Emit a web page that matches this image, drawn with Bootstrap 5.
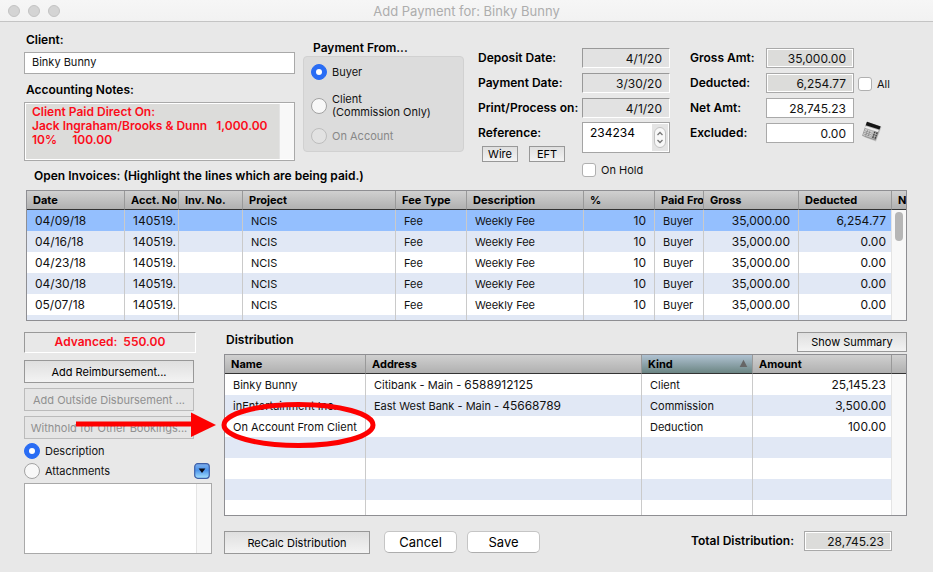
<!DOCTYPE html>
<html lang="en">
<head>
<meta charset="utf-8">
<meta name="viewport" content="width=device-width, initial-scale=1">
<title>Add Payment for: Binky Bunny</title>
<link href="https://cdn.jsdelivr.net/npm/bootstrap@5.3.0/dist/css/bootstrap.min.css" rel="stylesheet">
<style>
body{font-family:Inter,"Liberation Sans",sans-serif;font-size:11px;line-height:14px;color:#111;background:#e8e8e8}
.titlebar{height:22px;background:linear-gradient(#f6f6f6,#f2f2f2);border-bottom:1px solid #c4c4c4;color:#adadad;font-size:13px;line-height:20px;padding:0 8px}
.dot{width:12px;height:12px;border-radius:50%;background:#d4d4d4;border:1px solid #c3c3c3}
.dots{width:80px;gap:8px}
main{padding:10px 26px 0 24px}
.cap{font-weight:600;font-size:12px;line-height:16px;color:#000}
.indent{padding-left:2px}
.figs{font-size:12px}
.top-grid{display:grid;grid-template-columns:minmax(0,271fr) minmax(0,161fr) minmax(0,198fr) minmax(0,229fr);column-gap:8px}
.dates{grid-area:1 / 3 / 3 / 4}
.amounts{grid-area:1 / 4 / 3 / 5}
.table-cap{grid-area:2 / 1 / 3 / 3;margin:0;padding:7px 0 6px 10px}
.field{display:block;width:100%;height:20px;line-height:14px;border:1px solid #a9a9a9;border-radius:0;background:#fff;color:#111;padding:0 7px;outline:0}
.field.name{height:22px;padding-bottom:2px}
.field.num{text-align:right;font-size:12px}
.sunk{background:#e2e2e2;border-color:#999 #fff #fff #999}
.ro{background:#dcdcda;box-shadow:inset 0 0 0 1px #fff}
.notes{height:59px;border:1px solid #a9a9a9;background:#fff;padding:1px 0 1px 1px}
.notes textarea,.memo textarea{resize:none;border:0;border-radius:0;outline:0;overflow:hidden;min-width:0}
.notes textarea{background:#dcdcda;color:#fb0d1b;font-weight:600;font-size:12px;line-height:14px;padding:1px 6px;white-space:pre}
.track{background:#f8f8f8;border-left:1px solid #e4e4e4;flex:0 0 15px}
.group-box{height:96px;background:#dcdcdc;border:1px solid #d1d1d1;border-radius:4px;padding:7px}
.opt{display:flex;align-items:center;gap:5px;margin:0;padding:0;min-height:16px}
.opt.pair{margin:14px 0 10px}
.opt.hold{padding-top:10px}
.opt .form-check-input{float:none;flex:none;margin:0;width:16px;height:16px;border:1px solid #a2a2a2;background-color:#f8f8f8}
.opt .form-check-input:checked{background-color:#2a6df4;border-color:#2a6df4;background-size:12px 12px}
.opt .form-check-input[type=checkbox]{width:14px;height:14px;border-radius:3px;background-color:#fff;border-color:#b0b0b0}
.opt .form-check-input:disabled{opacity:1;background-color:#e2e2e2;border-color:#bdbdbd}
.opt .form-check-input:disabled~label{color:#888;opacity:1}
.opt label{line-height:13px}
.key{display:grid;row-gap:5px;grid-auto-rows:20px;align-content:start}
.key label{line-height:19px}
.flat{font-size:11px;line-height:14px;padding:0 4px;border:1px solid #989898;border-radius:0;background:linear-gradient(#dfdfdf,#f3f3f3);color:#000;white-space:nowrap;height:23px}
.flat:disabled{opacity:1;background:#e5e5e5;border-color:#bbb;color:#909090}
.flat.tiny{height:16px;width:36px;line-height:13px;margin-top:3px}
.flat.sum{width:110px;height:20px}
.flat.recalc{width:146px}
.push{font-size:13px;line-height:18px;width:73px;height:22px;padding:0;background:#fff;color:#000;border:1px solid #c5c5c5;border-bottom-color:#adadad;border-radius:5px}
.vals{width:88px;flex:none}
.gaps{gap:11px}
.ref-box{height:31px;border:1px solid #a4a4a4;background:#fff;padding:1px;margin-top:4px}
.ref-box input{border:0;outline:0;min-width:0;width:0;padding:0 6px;height:17px}
.step-well{background:#e4e4e4;width:16px}
.stepper{width:12px;height:21px;border:1px solid #c2c2c2;border-radius:6px;background:#f8f8f8;padding:0}
.names{width:80px;flex:none}
.nums{width:88px;flex:none}
.extras{padding:28px 0 0 4px}
.extras .calc{margin-top:29px}
.sheet{border:1px solid #8e8e92;background:#fff;overflow:hidden}
.sheet table{table-layout:fixed;width:100%;border-collapse:separate;border-spacing:0;margin:0}
.sheet th{height:19px;font-size:11px;line-height:14px;padding:0 0 1px 6px;font-weight:700;color:#000;background:linear-gradient(#d0d0d0,#b0b0b0);border-bottom:1px solid #333;overflow:hidden;white-space:nowrap;border-right:1px solid #999}
.sheet td{height:21px;padding:0 8px;overflow:hidden;white-space:nowrap;border-right:1px solid #cacaca}
.sheet th:last-child,.sheet td.rail{border-right:0}
.sheet td.clip{padding-right:0}
.sheet td.rail{background:#f8f8f8;padding:2px 0 0 3px;vertical-align:top}
.sheet td.last{padding-right:5px;border-right-color:#e4e4e4}
.thumb{display:block;width:8px;height:29px;border-radius:4px;background:#b6b6b6}
.tint td{background:#e1e8f5}
.picked td{background:#94bffe}
.sheet th.sorted{background:linear-gradient(#b0c2d2,#6b8583)}
.invoices{height:131px;margin-left:2px}
.payees{height:162px;margin:2px 0 15px}
.lower{gap:12px;padding-top:11px}
.side{width:188px;flex:none}
.side .wide{width:170px}
.stack{gap:5px;padding-top:7px}
.advance{width:172px;height:21px;border:1px solid;border-color:#999 #fff #fff #999;color:#fb0d1b;font-weight:600;font-size:12px;line-height:18px;white-space:pre}
.memo{height:71px;border:1px solid #a9a9a9;background:#fff}
.markup{position:absolute;left:48px;top:79px;pointer-events:none}
.drop{padding:0;border:0;background:none;line-height:0}
.total{width:88px;margin-right:15px}
.actions{gap:10px}
.actions .recalc{margin-right:4px}
.actions .cap{line-height:20px}
</style>
<script src="https://cdn.jsdelivr.net/npm/bootstrap@5.3.0/dist/js/bootstrap.bundle.min.js" defer></script>
</head>
<body>
<header class="titlebar d-flex align-items-center">
  <div class="dots d-flex"><span class="dot"></span><span class="dot"></span><span class="dot"></span></div>
  <div class="flex-fill text-center">Add Payment for: Binky Bunny</div>
  <div class="dots"></div>
</header>
<main>
  <section class="top-grid">
    <div>
      <label class="cap indent d-block mb-1" for="client">Client:</label>
      <input class="field name" id="client" value="Binky Bunny">
      <label class="cap indent d-block mt-2 mb-1" for="notes">Accounting Notes:</label>
      <div class="notes d-flex">
        <textarea id="notes" class="flex-fill" readonly>Client Paid Direct On:
Jack Ingraham/Brooks &amp; Dunn   1,000.00
10%     100.00</textarea>
        <div class="track"></div>
      </div>
    </div>
    <fieldset class="pt-2">
      <legend class="cap indent mb-0 ms-2">Payment From...</legend>
      <div class="group-box d-flex flex-column">
        <div class="opt"><input class="form-check-input" type="radio" name="from" id="buyer" checked><label for="buyer">Buyer</label></div>
        <div class="opt pair"><input class="form-check-input" type="radio" name="from" id="fromclient"><label for="fromclient">Client<br>(Commission Only)</label></div>
        <div class="opt"><input class="form-check-input" type="radio" name="from" id="acct" disabled><label for="acct">On Account</label></div>
      </div>
    </fieldset>
    <h2 class="cap table-cap" id="inv">Open Invoices: (Highlight the lines which are being paid.)</h2>
    <div class="dates d-flex justify-content-between pt-3 ps-1">
      <div class="indent">
        <div class="key">
          <label class="cap" for="dep">Deposit Date:</label>
          <label class="cap" for="pay">Payment Date:</label>
          <label class="cap text-nowrap" for="prt">Print/Process on:</label>
          <label class="cap" for="ref">Reference:</label>
        </div>
        <div class="d-flex ps-1 gaps"><button class="btn flat tiny" type="button">Wire</button><button class="btn flat tiny" type="button">EFT</button></div>
      </div>
      <div class="vals">
        <div class="key">
          <input class="field num sunk" id="dep" value="4/1/20" readonly>
          <input class="field num sunk" id="pay" value="3/30/20" readonly>
          <input class="field num sunk" id="prt" value="4/1/20" readonly>
        </div>
        <div class="ref-box d-flex">
          <input id="ref" class="figs flex-fill" value="234234">
          <div class="step-well d-flex align-items-center justify-content-center">
            <button class="stepper" type="button" aria-label="Step reference"><svg class="d-block mx-auto" width="8" height="17" viewBox="0 0 8 17" fill="none" stroke="#777" stroke-width="1.3"><path d="M1.5 6 4 3.5 6.500 6M1.500 11 4 13.500 6.500 11"/></svg></button>
          </div>
        </div>
        <div class="opt hold"><input class="form-check-input" type="checkbox" id="hold"><label for="hold">On Hold</label></div>
      </div>
    </div>
    <div class="amounts d-flex pt-3 ps-2">
      <div class="key names ps-1">
        <label class="cap" for="gross">Gross Amt:</label>
        <label class="cap" for="ded">Deducted:</label>
        <label class="cap" for="net">Net Amt:</label>
        <label class="cap" for="exc">Excluded:</label>
      </div>
      <div class="key nums">
        <input class="field num ro" id="gross" value="35,000.00" readonly>
        <input class="field num ro" id="ded" value="6,254.77" readonly>
        <input class="field num" id="net" value="28,745.23">
        <input class="field num" id="exc" value="0.00">
      </div>
      <div class="extras">
        <div class="opt"><input class="form-check-input" type="checkbox" id="all"><label for="all">All</label></div>
        <button class="drop calc ms-1" type="button" aria-label="Calculator">
          <svg width="20" height="21" viewBox="0 0 20 21"><path d="M2 16 14 20.500 19.500 6 18 5z" fill="#c4c4c4"/><path d="M5 1.200 18.200 5.600 13.400 19 .600 14.600z" fill="#b4b4b4" stroke="#777" stroke-width=".6"/><path d="M5 .8 18.600 5.400 17.400 8.600 3.800 4.200z" fill="#141414"/><path d="m3.600 5 13.200 4.200-.7 1.900L2.900 6.800z" fill="#ededed"/><path d="m3.200 8.200 7.400 2.500-2 5.800-7.400-2.600z" fill="#dcdcdc"/><path d="m2.700 9.700 7.300 2.500M2.200 11.400l7.200 2.500M1.800 13l7 2.400M5.600 9l-2 5.700M8 9.900 6 15.500" stroke="#808080" stroke-width=".7"/><path d="m13 10.600-2.300 6.500M15.200 11.300 12.900 18" stroke="#3c3c3c" stroke-width="1.300" stroke-dasharray="1.800 .7"/></svg>
        </button>
      </div>
    </div>
  </section>

  <div class="sheet invoices">
    <table aria-labelledby="inv">
      <colgroup><col style="width:98px"><col style="width:54px"><col style="width:64px"><col><col style="width:71px"><col style="width:117px"><col style="width:71px"><col style="width:49px"><col style="width:95px"><col style="width:93px"><col style="width:14px"></colgroup>
      <thead><tr><th>Date</th><th>Acct. No</th><th>Inv. No.</th><th>Project</th><th>Fee Type</th><th>Description</th><th>%</th><th>Paid Fro</th><th>Gross</th><th>Deducted</th><th>N</th></tr></thead>
      <tbody>
        <tr class="picked"><td class="figs">04/09/18</td><td class="figs clip">140519.</td><td></td><td>NCIS</td><td>Fee</td><td>Weekly Fee</td><td class="figs text-end">10</td><td>Buyer</td><td class="figs text-end">35,000.00</td><td class="figs text-end last">6,254.77</td><td class="rail" rowspan="6"><span class="thumb"></span></td></tr>
        <tr class="tint"><td class="figs">04/16/18</td><td class="figs clip">140519.</td><td></td><td>NCIS</td><td>Fee</td><td>Weekly Fee</td><td class="figs text-end">10</td><td>Buyer</td><td class="figs text-end">35,000.00</td><td class="figs text-end last">0.00</td></tr>
        <tr><td class="figs">04/23/18</td><td class="figs clip">140519.</td><td></td><td>NCIS</td><td>Fee</td><td>Weekly Fee</td><td class="figs text-end">10</td><td>Buyer</td><td class="figs text-end">35,000.00</td><td class="figs text-end last">0.00</td></tr>
        <tr class="tint"><td class="figs">04/30/18</td><td class="figs clip">140519.</td><td></td><td>NCIS</td><td>Fee</td><td>Weekly Fee</td><td class="figs text-end">10</td><td>Buyer</td><td class="figs text-end">35,000.00</td><td class="figs text-end last">0.00</td></tr>
        <tr><td class="figs">05/07/18</td><td class="figs clip">140519.</td><td></td><td>NCIS</td><td>Fee</td><td>Weekly Fee</td><td class="figs text-end">10</td><td>Buyer</td><td class="figs text-end">35,000.00</td><td class="figs text-end last">0.00</td></tr>
        <tr class="tint"><td></td><td></td><td></td><td></td><td></td><td></td><td></td><td></td><td></td><td class="last"></td></tr>
      </tbody>
    </table>
  </div>

  <section class="lower d-flex position-relative">
    <div class="side">
      <div class="advance text-center">Advanced:  550.00</div>
      <div class="stack d-flex flex-column">
        <button class="btn flat wide" type="button">Add Reimbursement...</button>
        <button class="btn flat wide" type="button" disabled>Add Outside Disbursement ...</button>
        <button class="btn flat wide" type="button" disabled>Withhold for Other Bookings...</button>
      </div>
      <div class="opt pt-1"><input class="form-check-input" type="radio" name="view" id="desc" checked><label for="desc">Description</label></div>
      <div class="d-flex justify-content-between pt-1">
        <div class="opt"><input class="form-check-input" type="radio" name="view" id="att"><label for="att">Attachments</label></div>
        <button class="drop" type="button" aria-label="Show menu"><svg width="18" height="16" viewBox="0 0 18 16"><defs><linearGradient id="b" x2="0" y2="1"><stop stop-color="#7fb0ee"/><stop offset=".45" stop-color="#4d94ea"/><stop offset="1" stop-color="#a8e4ff"/></linearGradient></defs><rect x=".7" y=".7" width="14.6" height="14.6" rx="3" fill="url(#b)" stroke="#3d5fa8" stroke-width="1.2"/><path d="M4.600 5.600h6.800L8 10z" fill="#0a0a14"/></svg></button>
      </div>
      <div class="memo d-flex mt-1"><textarea class="flex-fill" aria-label="Description text"></textarea><div class="track"></div></div>
    </div>
    <div class="flex-fill">
      <div class="d-flex justify-content-between">
        <h2 class="cap indent m-0" id="dist">Distribution</h2>
        <button class="btn flat sum" type="button">Show Summary</button>
      </div>
      <div class="sheet payees">
        <table aria-labelledby="dist">
          <colgroup><col style="width:141px"><col><col style="width:111px"><col style="width:139px"><col style="width:14px"></colgroup>
          <thead><tr><th>Name</th><th>Address</th><th class="sorted"><div class="d-flex justify-content-between align-items-center pe-1">Kind<svg width="9" height="9" viewBox="0 0 9 9"><path d="M4.500.8 8.300 8H.7z" fill="#666"/></svg></div></th><th>Amount</th><th></th></tr></thead>
          <tbody>
            <tr><td>Binky Bunny</td><td>Citibank - Main - <span class="figs">6588912125</span></td><td>Client</td><td class="figs text-end last">25,145.23</td><td class="rail" rowspan="7"></td></tr>
            <tr class="tint"><td>inEntertainment Inc.</td><td>East West Bank - Main - <span class="figs">45668789</span></td><td>Commission</td><td class="figs text-end last">3,500.00</td></tr>
            <tr><td>On Account From Client</td><td></td><td>Deduction</td><td class="figs text-end last">100.00</td></tr>
            <tr class="tint"><td></td><td></td><td></td><td class="last"></td></tr>
            <tr><td></td><td></td><td></td><td class="last"></td></tr>
            <tr class="tint"><td></td><td></td><td></td><td class="last"></td></tr>
            <tr><td></td><td></td><td></td><td class="last"></td></tr>
          </tbody>
        </table>
      </div>
      <div class="actions d-flex align-items-start">
        <button class="btn flat recalc" type="button">ReCalc Distribution</button>
        <button class="btn push" type="button">Cancel</button>
        <button class="btn push" type="button">Save</button>
        <label class="cap ms-auto" for="total">Total Distribution:</label>
        <div class="total"><input class="field num ro" id="total" value="28,745.23" readonly></div>
      </div>
    </div>
    <svg class="markup" width="310" height="52" viewBox="0 0 310 52" fill="none"><path d="M4 24h118" stroke="#fe0000" stroke-width="5"/><path d="M119 12.500 144 25l-25 12z" fill="#fe0000"/><ellipse cx="226.500" cy="25" rx="74.500" ry="20.500" stroke="#fe0000" stroke-width="5"/></svg>
  </section>
</main>
</body>
</html>
